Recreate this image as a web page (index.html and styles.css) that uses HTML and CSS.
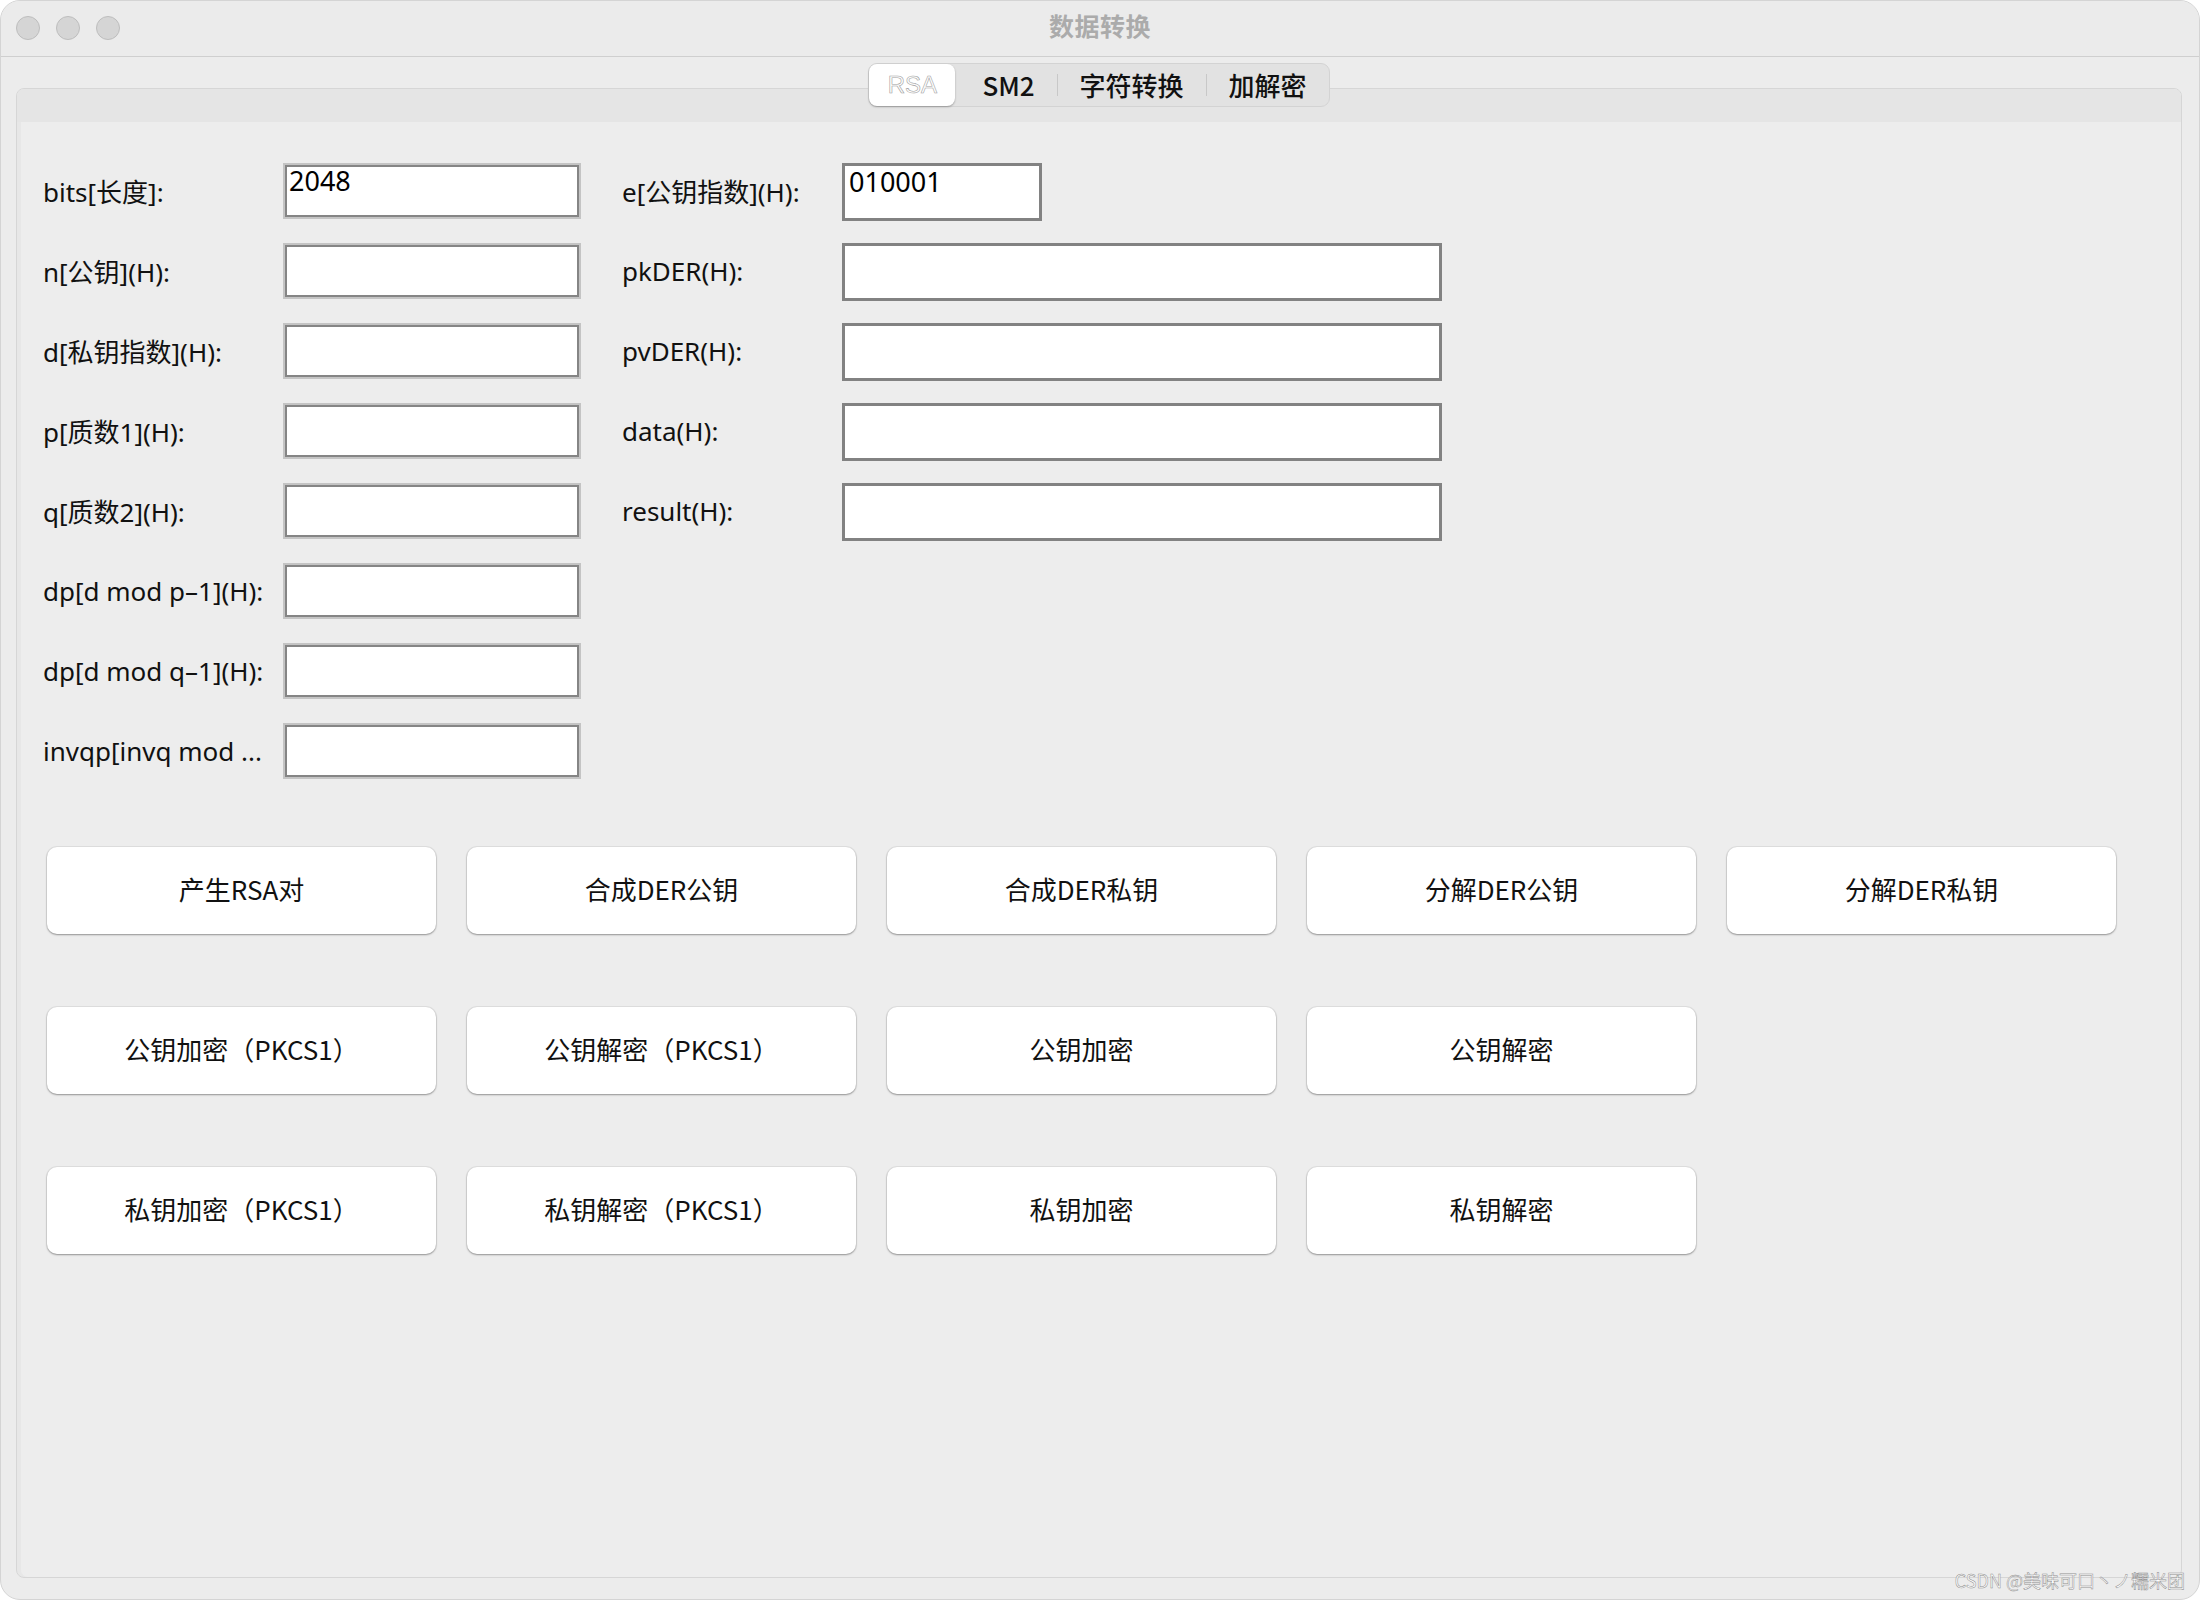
FILE: index.html
```html
<!DOCTYPE html>
<html lang="zh">
<head>
<meta charset="utf-8">
<title>数据转换</title>
<link rel="stylesheet" href="styles.css">
</head>
<body>
<div class="window">
  <div class="titlebar">
    <div class="lights"><span class="light"></span><span class="light"></span><span class="light"></span></div>
    <div class="title">数据转换</div>
    <div></div>
  </div>
  <div class="content">
    <div class="tabs">
      <div class="tab selected">RSA</div>
      <div class="tab">SM2</div>
      <div class="sep"></div>
      <div class="tab">字符转换</div>
      <div class="sep"></div>
      <div class="tab">加解密</div>
    </div>
    <div class="panel">
      <div class="panel-head"></div>
      <div class="panel-body">
        <div class="form">
          <div class="label">bits[长度]:</div>
          <div class="field"><span class="val">2048</span></div>
          <div class="label rl">e[公钥指数](H):</div>
          <div class="field2 short"><span class="val">010001</span></div>

          <div class="label">n[公钥](H):</div>
          <div class="field"></div>
          <div class="label rl">pkDER(H):</div>
          <div class="field2"></div>

          <div class="label">d[私钥指数](H):</div>
          <div class="field"></div>
          <div class="label rl">pvDER(H):</div>
          <div class="field2"></div>

          <div class="label">p[质数1](H):</div>
          <div class="field"></div>
          <div class="label rl">data(H):</div>
          <div class="field2"></div>

          <div class="label">q[质数2](H):</div>
          <div class="field"></div>
          <div class="label rl">result(H):</div>
          <div class="field2"></div>

          <div class="label">dp[d mod p&#8211;1](H):</div>
          <div class="field"></div>
          <div></div><div></div>

          <div class="label">dp[d mod q&#8211;1](H):</div>
          <div class="field"></div>
          <div></div><div></div>

          <div class="label">invqp[invq mod ...</div>
          <div class="field"></div>
          <div></div><div></div>
        </div>

        <div class="buttons">
          <div class="btn">产生RSA对</div>
          <div class="btn">合成DER公钥</div>
          <div class="btn">合成DER私钥</div>
          <div class="btn">分解DER公钥</div>
          <div class="btn">分解DER私钥</div>

          <div class="btn">公钥加密（PKCS1）</div>
          <div class="btn">公钥解密（PKCS1）</div>
          <div class="btn">公钥加密</div>
          <div class="btn">公钥解密</div>
          <div></div>

          <div class="btn">私钥加密（PKCS1）</div>
          <div class="btn">私钥解密（PKCS1）</div>
          <div class="btn">私钥加密</div>
          <div class="btn">私钥解密</div>
          <div></div>
        </div>
      </div>
    </div>
  </div>
  <div class="watermark">CSDN @美味可口丶ノ糯米团</div>
</div>
</body>
</html>
```

FILE: styles.css
```css
html, body {
  margin: 0;
  padding: 0;
  background: #ffffff;
}

body {
  font-family: "Noto Sans", "Noto Sans CJK SC", sans-serif;
  color: #111;
}

.window {
  position: relative;
  width: 2200px;
  height: 1600px;
  box-sizing: border-box;
  background: #ececec;
  border-radius: 20px;
  border: 1px solid #d4d4d4;
  overflow: hidden;
}

.titlebar {
  height: 55px;
  background: #ebebeb;
  border-bottom: 1px solid #cfcfcf;
  display: grid;
  grid-template-columns: 1fr auto 1fr;
  align-items: center;
}

.lights {
  display: flex;
  gap: 16px;
  padding-left: 15px;
  padding-bottom: 2px;
}

.light {
  width: 22px;
  height: 22px;
  border-radius: 50%;
  background: #d5d5d5;
  border: 1px solid #bdbdbd;
}

.title {
  font-family: "Noto Sans CJK SC", sans-serif;
  font-weight: 700;
  font-size: 25px;
  color: #ababab;
  letter-spacing: 0.5px;
  padding-bottom: 8px;
}

.content {
  padding: 6px 17px 22px 15px;
}

.tabs {
  position: relative;
  z-index: 2;
  margin: 0 auto;
  width: max-content;
  height: 44px;
  box-sizing: border-box;
  display: flex;
  align-items: center;
  background: #e2e2e2;
  border: 1px solid #d3d3d3;
  border-radius: 9px;
  font-family: "Noto Sans CJK SC", sans-serif;
  font-size: 26px;
  white-space: nowrap;
}

.tab {
  flex: none;
  height: 100%;
  display: flex;
  align-items: center;
  justify-content: center;
  padding: 0 22px 2px;
  box-sizing: border-box;
  color: #111;
  font-weight: 500;
}

.tab.selected {
  width: 86px;
  padding: 0;
  background: #ffffff;
  border-radius: 8px;
  box-shadow: 0 1px 2px rgba(0, 0, 0, 0.3);
  color: #ffffff;
  -webkit-text-stroke: 0.6px #a0a0a0;
  font-family: "Liberation Sans", sans-serif;
  font-weight: 400;
  font-size: 24px;
}

.tab.selected + .tab {
  padding: 0 22px 2px 27px;
}

.sep {
  flex: none;
  width: 1px;
  height: 22px;
  background: #c8c8c8;
}

.panel {
  margin-top: -19px;
  height: 1490px;
  box-sizing: border-box;
  border: 1px solid #d6d6d6;
  border-radius: 8px;
  background: #ededed;
  box-shadow: inset 4px 0 0 #e7e7e7;
  overflow: hidden;
}

.panel-head {
  height: 33px;
  background: #e5e5e5;
}

.panel-body {
  padding: 41px 0 0 26px;
}

.form {
  display: grid;
  grid-template-columns: 240px 298px 220px 600px;
  grid-auto-rows: 56px;
  row-gap: 24px;
  column-gap: 0;
}

.form .rl {
  margin-left: 41px;
}

.form .field2 {
  margin-left: 41px;
}

.label {
  font-size: 26px;
  align-self: center;
  white-space: nowrap;
  color: #111;
  padding-bottom: 1px;
}

.field {
  box-sizing: border-box;
  height: 56px;
  background: #fff;
  border: 2px solid #c4c4c4;
  box-shadow: inset 0 0 0 2px #858585;
}

.field2 {
  box-sizing: border-box;
  height: 58px;
  background: #fff;
  border: 3px solid #828282;
  width: 600px;
}

.field2.short {
  width: 200px;
}

.val {
  display: block;
  padding: 0 0 0 4px;
  font-size: 27px;
  line-height: 32px;
  color: #000;
}

.buttons {
  margin-top: 68px;
  margin-left: 4px;
  display: grid;
  grid-template-columns: repeat(5, 389px);
  column-gap: 31px;
  grid-auto-rows: 87px;
  row-gap: 73px;
}

.btn {
  background: #ffffff;
  border-radius: 10px;
  box-shadow: 0 1px 2px rgba(0, 0, 0, 0.35), 0 0 0 1px rgba(0, 0, 0, 0.05);
  display: flex;
  align-items: center;
  justify-content: center;
  padding-bottom: 4px;
  box-sizing: border-box;
  font-family: "Noto Sans CJK SC", sans-serif;
  font-size: 26px;
  color: #111;
}

.watermark {
  position: absolute;
  right: 14px;
  bottom: 6px;
  font-family: "Noto Sans CJK SC", sans-serif;
  font-size: 18px;
  font-weight: 400;
  color: #ffffff;
  -webkit-text-stroke: 0.5px #8e8e8e;
}
```
